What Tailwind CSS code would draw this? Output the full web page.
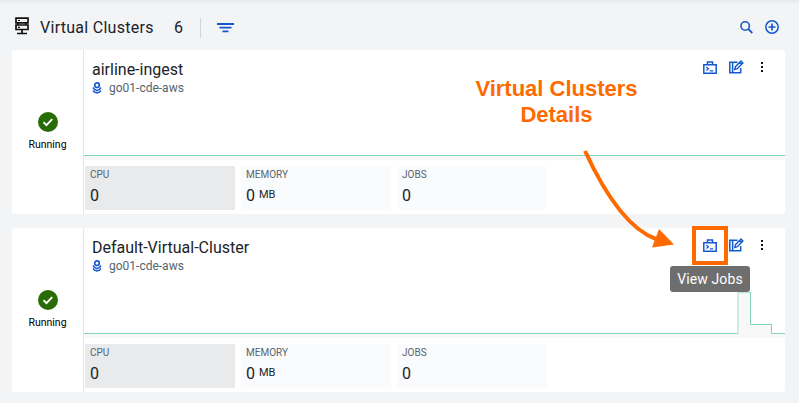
<!DOCTYPE html>
<html lang="en">
<head>
<meta charset="utf-8">
<title>Virtual Clusters</title>
<script src="https://cdn.jsdelivr.net/npm/@tailwindcss/browser@4"></script>
</head>
<body class="relative h-[403px] w-[799px] overflow-hidden bg-[#f3f4f6] font-['Roboto','Liberation_Sans',sans-serif] text-[#1b2329]">
<svg class="hidden">
  <symbol id="jobs" viewBox="0 0 14 13"><path d="M.8 3.7h12.400v8.500H.8zM4.500 3.500V1h5v2.500" fill="none" stroke="#1458cf" stroke-width="1.500"/><path d="M3.400 6l2 1.800-2 1.800M6.800 9.800h3.400" fill="none" stroke="#1458cf" stroke-width="1.300"/></symbol>
  <symbol id="edit" viewBox="0 0 15 14"><path d="M8.500 2.200H.8v10.600h10.900V8M3.600 2.200v10.600" fill="none" stroke="#1458cf" stroke-width="1.500"/><path d="M5.800 9.400l.6-2.700L12 1.100l1.900 1.900-5.600 5.700zM10.500 2.600l1.900 1.900" fill="#fff" stroke="#1458cf" stroke-width="1.400"/></symbol>
  <symbol id="dots" viewBox="0 0 4 12"><path d="M1 1h2v2H1zM1 5h2v2H1zM1 9h2v2H1z" fill="#111"/></symbol>
  <symbol id="env" viewBox="0 0 10 12"><circle cx="5" cy="3.200" r="2.300" fill="none" stroke="#1458cf" stroke-width="1.700"/><path d="M1 5.500l1.500 2L5 8.600l2.500-1.100L9 5.500M1 8.600l1.500 1.600L5 11l2.500-.8L9 8.600" fill="none" stroke="#1458cf" stroke-width="1.500"/></symbol>
  <symbol id="ok" viewBox="0 0 20 20"><circle cx="10" cy="10" r="10" fill="#286c07"/><path d="M5.500 10.300l3 2.900 5.700-6" fill="none" stroke="#fff" stroke-width="1.900"/></symbol>
</svg>
<div class="absolute inset-x-0 top-0 h-1 bg-linear-to-b from-[#e6e7e9] to-[#f3f4f6]"></div>
<header class="flex h-[50px] items-center pt-1 pr-5 pl-[15px]">
  <svg class="h-[18px] w-[14px] -translate-y-px" viewBox="0 0 14 18"><path d="M1 1.200h12v4.600H1zM1 8h12v4.500H1zM7 12.500v4M2 16.500h10M3 5.500v2.500M11 5.500v2.500" fill="none" stroke="#111" stroke-width="1.700"/><path d="M3 3.500h2M3 10.300h2" stroke="#111" stroke-width="1.200"/></svg>
  <h1 class="ml-[11px] w-[134px] pt-[2px] text-[16px] leading-6 tracking-[0.28px]">Virtual Clusters</h1>
  <span class="w-[26px] pt-[2px] text-[16px] leading-6">6</span>
  <span class="h-5 w-px translate-y-px bg-[#d3d6d9]"></span>
  <svg class="ml-4 h-[10px] w-[17px] translate-y-px" viewBox="0 0 17 10"><path d="M0 1h17M2.500 4.700h12M5.500 8.400h6" stroke="#1458cf" stroke-width="1.800"/></svg>
  <svg class="ml-auto h-[13px] w-[13px]" viewBox="0 0 13 13"><circle cx="5.200" cy="5" r="4.200" fill="none" stroke="#1458cf" stroke-width="1.600"/><path d="M8.100 7.900l4.200 4.100" stroke="#1458cf" stroke-width="1.800"/></svg>
  <svg class="ml-3 h-[14px] w-[14px]" viewBox="0 0 14 14"><circle cx="7" cy="7" r="6.200" fill="none" stroke="#1458cf" stroke-width="1.500"/><path d="M7 3.500v7M3.500 7h7" stroke="#1458cf" stroke-width="1.700"/></svg>
</header>
<main class="ml-3 flex w-[773px] flex-col gap-[14px]">
  <section class="flex h-[164px] overflow-hidden rounded-[3px] bg-white">
    <div class="flex w-[72px] flex-col items-center border-r border-[#e3e5e7] pt-[62px]">
      <svg class="h-5 w-5"><use href="#ok"/></svg>
      <span class="mt-[5px] text-[10.500px] leading-4 text-black">Running</span>
    </div>
    <div class="flex min-w-0 flex-1 flex-col">
      <div class="flex h-[50px] justify-between pt-[9px] pl-2">
        <div>
          <h2 class="h-5 pt-px text-[16px] leading-5">airline-ingest</h2>
          <p class="flex items-center gap-[7px] text-[12px] leading-[18px] text-[#56646e]"><svg class="h-3 w-[10px]"><use href="#env"/></svg>go01-cde-aws</p>
        </div>
        <div class="flex h-[16px] items-center pr-[21px]">
          <svg class="h-[13px] w-[14px]"><use href="#jobs"/></svg>
          <svg class="ml-[12px] h-[14px] w-[15px]"><use href="#edit"/></svg>
          <svg class="ml-[16px] h-3 w-1"><use href="#dots"/></svg>
        </div>
      </div>
      <svg class="h-[60px] w-[701px]" viewBox="0 0 701 60"><path d="M0 55.500H701V60H0z" fill="#f8f8f8"/><path d="M0 55.500H701" fill="none" stroke="#82d3be"/></svg>
      <div class="mt-[6px] flex gap-[6px] pl-px">
        <div class="h-[44px] w-[150px] bg-[#e9eaeb] pt-[2px] pl-[5px]"><div class="text-[10px] leading-[14px] text-[#56646e]">CPU</div><div class="mt-1 text-[16px] leading-5">0</div></div>
        <div class="h-[44px] w-[150px] bg-[#fafbfd] pt-[2px] pl-[5px]"><div class="text-[10px] leading-[14px] text-[#56646e]">MEMORY</div><div class="mt-1 flex text-[16px] leading-5">0<span class="ml-1 text-[11px] leading-[18px]">MB</span></div></div>
        <div class="h-[44px] w-[150px] bg-[#fafbfd] pt-[2px] pl-[5px]"><div class="text-[10px] leading-[14px] text-[#56646e]">JOBS</div><div class="mt-1 text-[16px] leading-5">0</div></div>
      </div>
    </div>
  </section>
  <section class="flex h-[164px] overflow-hidden rounded-[3px] bg-white">
    <div class="flex w-[72px] flex-col items-center border-r border-[#e3e5e7] pt-[62px]">
      <svg class="h-5 w-5"><use href="#ok"/></svg>
      <span class="mt-[5px] text-[10.500px] leading-4 text-black">Running</span>
    </div>
    <div class="flex min-w-0 flex-1 flex-col">
      <div class="flex h-[50px] justify-between pt-[9px] pl-2">
        <div>
          <h2 class="h-5 pt-px text-[16px] leading-5">Default-Virtual-Cluster</h2>
          <p class="flex items-center gap-[7px] text-[12px] leading-[18px] text-[#56646e]"><svg class="h-3 w-[10px]"><use href="#env"/></svg>go01-cde-aws</p>
        </div>
        <div class="flex h-[16px] items-center pr-[21px]">
          <svg class="h-[13px] w-[14px]"><use href="#jobs"/></svg>
          <svg class="ml-[12px] h-[14px] w-[15px]"><use href="#edit"/></svg>
          <svg class="ml-[16px] h-3 w-1"><use href="#dots"/></svg>
        </div>
      </div>
      <svg class="h-[60px] w-[701px]" viewBox="0 0 701 60"><path d="M0 55.500H654V14.500H666.500V46.500H687.500V55.500H701V60H0z" fill="#f8f8f8"/><path d="M0 55.500H654M666.500 14V46.500H687.500V55.500H701" fill="none" stroke="#82d3be"/><path d="M654 56V14.500H666" fill="none" stroke="#bfe8dd" stroke-width="1.500"/></svg>
      <div class="mt-[6px] flex gap-[6px] pl-px">
        <div class="h-[44px] w-[150px] bg-[#e9eaeb] pt-[2px] pl-[5px]"><div class="text-[10px] leading-[14px] text-[#56646e]">CPU</div><div class="mt-1 text-[16px] leading-5">0</div></div>
        <div class="h-[44px] w-[150px] bg-[#fafbfd] pt-[2px] pl-[5px]"><div class="text-[10px] leading-[14px] text-[#56646e]">MEMORY</div><div class="mt-1 flex text-[16px] leading-5">0<span class="ml-1 text-[11px] leading-[18px]">MB</span></div></div>
        <div class="h-[44px] w-[150px] bg-[#fafbfd] pt-[2px] pl-[5px]"><div class="text-[10px] leading-[14px] text-[#56646e]">JOBS</div><div class="mt-1 text-[16px] leading-5">0</div></div>
      </div>
    </div>
  </section>
</main>
<!-- Callout overlay -->
<p class="absolute top-[76px] left-[456px] w-[201px] text-center font-['Liberation_Sans',Arial,sans-serif] text-[22px] leading-[26px] font-bold text-[#ff6a00]">Virtual Clusters<br>Details</p>
<svg class="absolute top-0 left-0 h-[403px] w-[799px]" viewBox="0 0 799 403"><path d="M585 151C604 192 628 229 656 239" fill="none" stroke="#ff6a00" stroke-width="4"/><path d="M659 229L674 244.500L652 247.500z" fill="#ff6a00"/></svg>
<div class="absolute top-[226px] left-[692px] h-[39px] w-[36px] border-4 border-[#ff6a00]"></div>
<div class="absolute top-[266px] left-[670px] flex h-[26px] w-[80px] items-center justify-center rounded-[3px] bg-[#6e6e6e] pt-px text-[14px] tracking-[0.1px] text-white">View Jobs</div>
</body>
</html>
